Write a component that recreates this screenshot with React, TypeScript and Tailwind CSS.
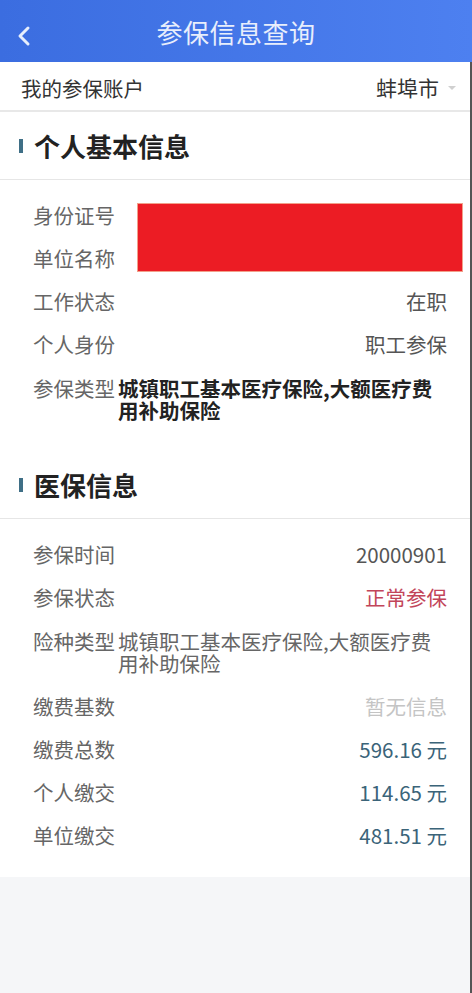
import React from 'react';

const font = { fontFamily: '"Noto Sans CJK SC", "Noto Sans", sans-serif' };

interface Row {
  label: string;
  value: string;
  tone?: 'plain' | 'red' | 'muted' | 'money';
  wrap?: boolean;
  bold?: boolean;
}

const basicRows: Row[] = [
  { label: '工作状态', value: '在职' },
  { label: '个人身份', value: '职工参保' },
  { label: '参保类型', value: '城镇职工基本医疗保险,大额医疗费用补助保险', wrap: true, bold: true },
];

const medicalRows: Row[] = [
  { label: '参保时间', value: '20000901' },
  { label: '参保状态', value: '正常参保', tone: 'red' },
  { label: '险种类型', value: '城镇职工基本医疗保险,大额医疗费用补助保险', wrap: true },
  { label: '缴费基数', value: '暂无信息', tone: 'muted' },
  { label: '缴费总数', value: '596.16 元', tone: 'money' },
  { label: '个人缴交', value: '114.65 元', tone: 'money' },
  { label: '单位缴交', value: '481.51 元', tone: 'money' },
];

const toneClass = {
  plain: 'text-[#555]',
  red: 'text-[#c2455a]',
  muted: 'text-[#c4c4c4]',
  money: 'text-[#3b6479]',
};

const InfoRow: React.FC<{ row: Row }> = ({ row }) => {
  if (row.wrap) {
    return (
      <div className="flex py-[11px] leading-[22px] text-[20.5px]">
        <span className="w-[82px] shrink-0 text-[#666]">{row.label}</span>
        <span className={`w-[326px] pl-[3px] ${row.bold ? 'font-bold text-[#222]' : 'text-[#666]'}`}>{row.value}</span>
      </div>
    );
  }
  return (
    <div className="flex h-[43px] items-center justify-between text-[20.5px]">
      <span className="text-[#666]">{row.label}</span>
      <span className={toneClass[row.tone ?? 'plain']}>{row.value}</span>
    </div>
  );
};

const SectionTitle: React.FC<{ title: string }> = ({ title }) => (
  <div className="flex h-[68px] items-center border-b border-[#e6e6e6] pl-[19px]">
    <span className="mr-[11px] h-[14px] w-[4px] bg-[#3f6f86]"></span>
    <span className="text-[26px] font-bold text-[#222]">{title}</span>
  </div>
);

export default function App() {
  return (
    <div className="min-h-[993px] w-[472px] bg-[#f5f6f8]" style={font}>
      {/* top bar */}
      <div className="relative flex h-[62px] items-center justify-center bg-gradient-to-r from-[#3b6de0] to-[#4d80f0]">
        <svg className="absolute left-[16px] top-[25px]" width="16" height="22" viewBox="0 0 16 22">
          <path d="M12 3 L4 11 L12 19" fill="none" stroke="#e6eefc" strokeWidth="3" strokeLinecap="round" strokeLinejoin="round" />
        </svg>
        <span className="text-[26px] tracking-[0.5px] text-[#e8eefc]">参保信息查询</span>
      </div>

      <div className="border-r-2 border-[#555]">
        {/* account row */}
        <div className="flex h-[50px] items-center justify-between border-b-2 border-[#e8e8e8] bg-white pt-[4px] pl-[21px] pr-[14px]">
          <span className="text-[20.5px] text-[#333]">我的参保账户</span>
          <div className="flex items-center">
            <span className="text-[21px] text-[#333]">蚌埠市</span>
            <span className="ml-[9px] h-0 w-0 border-x-[4px] border-t-[4px] border-x-transparent border-t-[#d0d0d0]"></span>
          </div>
        </div>

        <div className="bg-white pb-[20px]">
          <SectionTitle title="个人基本信息" />
          <div className="pl-[33px] pr-[23px] pt-[14px] pb-[19px]">
            <div className="relative">
              <div className="flex h-[43px] items-center text-[20.5px] text-[#666]">身份证号</div>
              <div className="flex h-[43px] items-center text-[20.5px] text-[#666]">单位名称</div>
              <div className="absolute left-[104px] top-[9px] h-[69px] w-[326px] border border-[#f2a08a] bg-[#ec1c24]"></div>
            </div>
            {basicRows.map((r) => (
              <InfoRow key={r.label} row={r} />
            ))}
          </div>

          <SectionTitle title="医保信息" />
          <div className="pl-[33px] pr-[23px] pt-[14px]">
            {medicalRows.map((r) => (
              <InfoRow key={r.label} row={r} />
            ))}
          </div>
        </div>
        <div className="h-[116px]"></div>
      </div>
    </div>
  );
}
